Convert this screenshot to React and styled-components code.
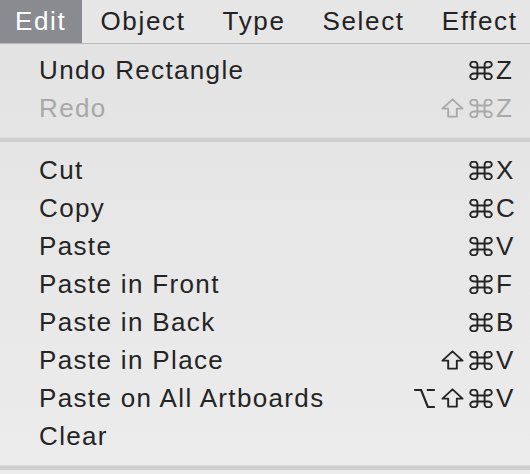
import { Fragment } from "react";
import styled, { createGlobalStyle } from "styled-components";

const GlobalStyle = createGlobalStyle`
  html, body {
    margin: 0;
    padding: 0;
    background: #e4e4e4;
  }
  body {
    font-family: "Liberation Sans", Arial, sans-serif;
    -webkit-font-smoothing: antialiased;
  }
`;

const Screen = styled.div`
  width: 530px;
  height: 474px;
  overflow: hidden;
  background: linear-gradient(#e2e2e2, #ececec);
`;

const MenuBar = styled.nav`
  display: flex;
  height: 43px;
  overflow: hidden;
  border-bottom: 1px solid #b9b9b9;
  background: #e6e6e6;
`;

const BarItem = styled.div`
  display: flex;
  flex-shrink: 0;
  align-items: center;
  padding: 0 18.5px;
  font-size: 26px;
  letter-spacing: 1.65px;
  color: ${(p) => (p.$active ? "#fff" : "#222")};
  background: ${(p) => (p.$active ? "#8a8b91" : "transparent")};
  &:first-child {
    width: 82px;
    box-sizing: border-box;
    padding: 0 0 0 15px;
    letter-spacing: 1.6px;
  }
`;

const Menu = styled.ul`
  list-style: none;
  margin: 0;
  padding: 7px 0 0;
`;

const Item = styled.li`
  display: flex;
  align-items: center;
  justify-content: space-between;
  height: 38px;
  padding: 0 15px 0 39px;
  font-size: 26px;
  letter-spacing: 1.35px;
  color: ${(p) => (p.$disabled ? "#a8a8a8" : "#242424")};
`;

const Shortcut = styled.span`
  display: grid;
  grid-template-columns: auto 19px;
  column-gap: 3px;
  align-items: center;
  letter-spacing: 0;
`;

const Mods = styled.span`
  display: flex;
  justify-content: flex-end;
  align-items: center;
  gap: 5px;
  svg {
    display: block;
    fill: none;
    stroke: currentColor;
    stroke-linecap: round;
    stroke-linejoin: round;
  }
`;

const Key = styled.span`
  font-size: 26px;
  line-height: 1;
`;

const Separator = styled.li`
  height: 24px;
  display: flex;
  align-items: center;
  &::after {
    content: "";
    display: block;
    width: 100%;
    height: 4px;
    background: #cfcfcf;
    border-top: 1px solid #dadada;
  }
`;

const Cmd = () => (
  <svg width="24" height="19" viewBox="2 2.5 20 19" preserveAspectRatio="none">
    <path
      d="M15 6v12a3 3 0 1 0 3-3H6a3 3 0 1 0 3 3V6a3 3 0 1 0-3 3h12a3 3 0 1 0-3-3"
      strokeWidth="1.9"
      vectorEffect="non-scaling-stroke"
    />
  </svg>
);

const Shift = () => (
  <svg width="23" height="20" viewBox="4 4 16 15" preserveAspectRatio="none">
    <path
      d="M9 18v-6H5l7-7 7 7h-4v6H9z"
      strokeWidth="1.9"
      vectorEffect="non-scaling-stroke"
    />
  </svg>
);

const Opt = () => (
  <svg width="23" height="19" viewBox="2 2 20 20" preserveAspectRatio="none">
    <path
      d="M3 3h6l6 18h6M14 3h7"
      strokeWidth="2.2"
      strokeLinecap="butt"
      vectorEffect="non-scaling-stroke"
    />
  </svg>
);

const modIcons = { cmd: Cmd, shift: Shift, opt: Opt };

const barItems = ["Edit", "Object", "Type", "Select", "Effect"];

const groups = [
  [
    { label: "Undo Rectangle", mods: ["cmd"], key: "Z" },
    { label: "Redo", mods: ["shift", "cmd"], key: "Z", disabled: true },
  ],
  [
    { label: "Cut", mods: ["cmd"], key: "X" },
    { label: "Copy", mods: ["cmd"], key: "C" },
    { label: "Paste", mods: ["cmd"], key: "V" },
    { label: "Paste in Front", mods: ["cmd"], key: "F" },
    { label: "Paste in Back", mods: ["cmd"], key: "B" },
    { label: "Paste in Place", mods: ["shift", "cmd"], key: "V" },
    { label: "Paste on All Artboards", mods: ["opt", "shift", "cmd"], key: "V" },
    { label: "Clear" },
  ],
];

export default function App() {
  return (
    <Screen>
      <GlobalStyle />
      <MenuBar>
        {barItems.map((name, i) => (
          <BarItem key={name} $active={i === 0}>
            {name}
          </BarItem>
        ))}
      </MenuBar>
      <Menu>
        {groups.map((group, gi) => (
          <Fragment key={gi}>
            {group.map((it) => (
              <Item key={it.label} $disabled={it.disabled}>
                <span>{it.label}</span>
                {it.key && (
                  <Shortcut>
                    <Mods>
                      {it.mods.map((m) => {
                        const Icon = modIcons[m];
                        return <Icon key={m} />;
                      })}
                    </Mods>
                    <Key>{it.key}</Key>
                  </Shortcut>
                )}
              </Item>
            ))}
            <Separator />
          </Fragment>
        ))}
      </Menu>
    </Screen>
  );
}
